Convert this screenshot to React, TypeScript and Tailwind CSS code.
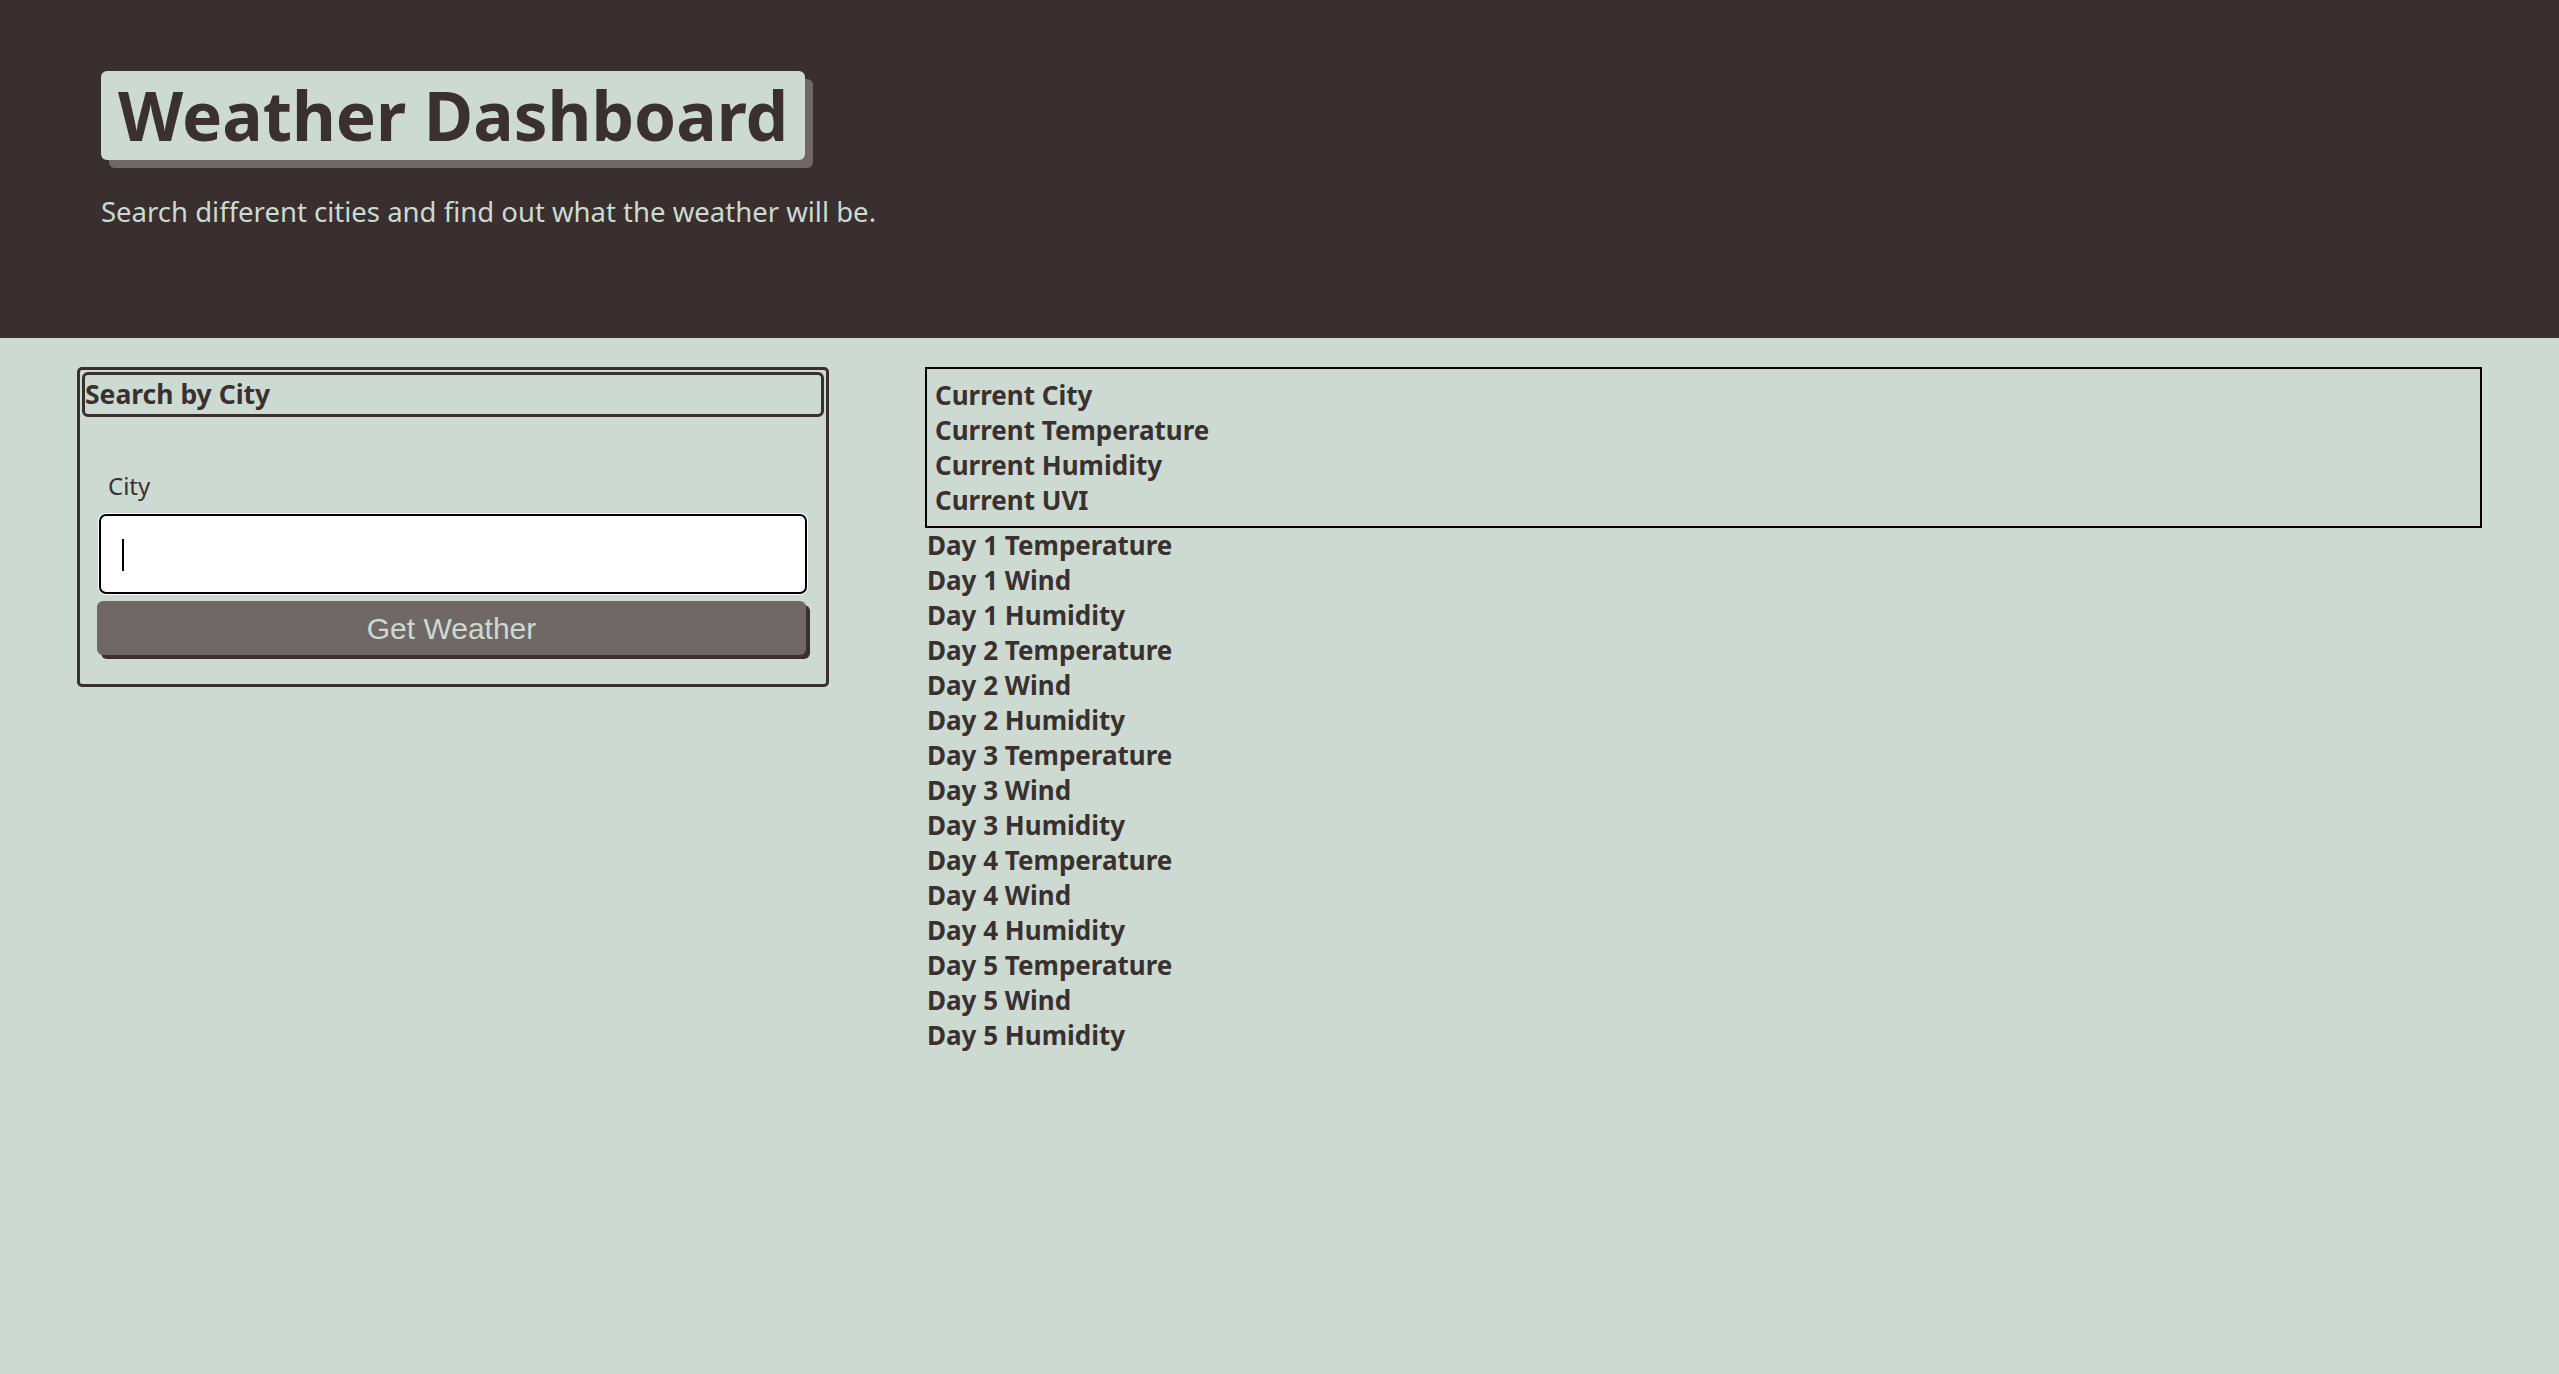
import { useState } from "react";

const currentRows = ["Current City", "Current Temperature", "Current Humidity", "Current UVI"];

const dayRows: string[] = [];
[1, 2, 3, 4, 5].forEach((d) => {
  dayRows.push(`Day ${d} Temperature`);
  dayRows.push(`Day ${d} Wind`);
  dayRows.push(`Day ${d} Humidity`);
});

const App = () => {
  const [city, setCity] = useState("");

  return (
    <div className="min-h-screen bg-[#ccdad1] text-[#3a3030] font-['Noto_Sans',sans-serif]">
      <header className="h-[338px] bg-[#392f2f] px-[101px] pt-[71px]">
        <h1 className="inline-block h-[89px] rounded-[6px] bg-[#ccdad1] px-[17px] text-[67.5px] font-bold leading-[89px] shadow-[8px_8px_0_#706866]">
          Weather Dashboard
        </h1>
        <p className="mt-[35px] text-[27.5px] leading-[34px] text-[#ccdad1]">
          Search different cities and find out what the weather will be.
        </p>
      </header>

      <main className="flex items-start gap-[96px] px-[77px] pt-[29px]">
        <section className="w-[752px] shrink-0 rounded-[5px] border-[3px] border-[#392f2f] p-[2px] pb-[29px]">
          <h2 className="h-[45px] rounded-[6px] border-[3px] border-[#392f2f] text-[26.5px] font-bold leading-[38px]">
            Search by City
          </h2>
          <div className="px-[17px]">
            <label htmlFor="city" className="mt-[54px] block pl-[9px] text-[24px] leading-[30px]">
              City
            </label>
            <div className="relative mt-[13px]">
              <input
                id="city"
                value={city}
                onChange={(e) => setCity(e.target.value)}
                className="block h-[80px] w-full rounded-[7px] border-2 border-black bg-white px-[22px] text-[26px] outline-none ring-1 ring-white"
              />
              {city === "" && (
                <span className="pointer-events-none absolute left-[23px] top-[25px] h-[32px] w-[2px] bg-black" />
              )}
            </div>
            <button className="mt-[7px] block h-[54px] w-[709px] -ml-[2px] rounded-[6px] bg-[#706866] font-['Liberation_Sans',Arial,sans-serif] text-[30px] text-[#ccdad1] shadow-[4px_4px_0_#392f2f]">
              Get Weather
            </button>
          </div>
        </section>

        <section className="flex-1 text-[26px] font-bold leading-[35px]">
          <div className="border-2 border-black px-[8px] pb-[8px] pt-[9px]">
            {currentRows.map((r) => (
              <p key={r}>{r}</p>
            ))}
          </div>
          <div className="pl-[2px]">
            {dayRows.map((r) => (
              <p key={r}>{r}</p>
            ))}
          </div>
        </section>
      </main>
    </div>
  );
};

export default App;
